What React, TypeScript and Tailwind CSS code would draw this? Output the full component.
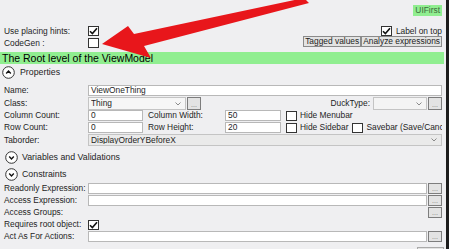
import React from "react";

const Check = ({ checked }: { checked?: boolean }) => (
  <div className="w-[11px] h-[10px] bg-white border border-[#333] flex items-center justify-center shrink-0">
    {checked && (
      <svg width="9" height="8" viewBox="0 0 9 8">
        <path d="M1 4.2 L3.4 6.6 L8 1.2" stroke="#111" strokeWidth="1.6" fill="none" />
      </svg>
    )}
  </div>
);

const Dots = () => (
  <div className="w-[14px] h-full bg-[#e3e3e3] border border-[#7d7d7d] flex items-end justify-center shrink-0">
    <span className="text-[7px] leading-[7px] text-[#777] pb-[1px]">...</span>
  </div>
);

const Combo = ({ text, className }: { text?: string; className: string }) => (
  <div className={`h-full border border-[#c4c4c4] flex items-center pl-[2px] pr-[4px] ${className}`}>
    <span className="flex-1 truncate">{text}</span>
    <svg width="6" height="4" viewBox="0 0 6 4">
      <path d="M0.5 0.5 L3 3 L5.5 0.5" stroke="#8a8a8a" strokeWidth="1" fill="none" />
    </svg>
  </div>
);

const Input = ({ text, className = "" }: { text?: string; className?: string }) => (
  <div className={`h-full bg-white border border-[#b8b8b8] flex items-center pl-[2px] ${className}`}>
    {text}
  </div>
);

const Circle = ({ up }: { up?: boolean }) => (
  <svg width="13" height="13" viewBox="0 0 13 13" className="shrink-0">
    <circle cx="6.5" cy="6.5" r="5.8" stroke="#333" strokeWidth="1" fill="white" />
    {up ? (
      <path d="M4.2 7.4 L6.5 5.1 L8.8 7.4" stroke="#111" strokeWidth="1.4" fill="none" />
    ) : (
      <path d="M4.2 5.6 L6.5 7.9 L8.8 5.6" stroke="#111" strokeWidth="1.4" fill="none" />
    )}
  </svg>
);

const Label = ({ children }: { children: React.ReactNode }) => (
  <div className="w-[84px] shrink-0 whitespace-nowrap">{children}</div>
);

export default function App() {
  return (
    <div className="relative w-[449px] h-[249px] overflow-hidden flex bg-[#efeff1] text-[#1e1e1e] font-['Liberation_Sans',Arial,sans-serif] text-[8.4px] leading-none">
      <div className="w-[446px] h-full pr-[4px]">
        {/* top */}
        <div className="h-[52px] flex justify-between items-start">
          <div className="pl-[4px] pt-[26px] flex flex-col gap-[2px]">
            <div className="h-[10px] flex items-center">
              <Label>Use placing hints:</Label>
              <Check checked />
            </div>
            <div className="h-[10px] flex items-center">
              <Label>CodeGen :</Label>
              <Check />
            </div>
          </div>
          <div className="flex flex-col items-end pt-[5px]">
            <div className="h-[11px] bg-[#90ee90] px-[2px] flex items-center text-[#3d6b3d]">UIFirst</div>
            <div className="mt-[10px] h-[10px] flex items-center gap-[4px]">
              <Check checked />
              <span>Label on top</span>
            </div>
            <div className="h-[11px] flex">
              <div className="h-full px-[1px] bg-[#e3e3e3] border border-[#8a8a8a] flex items-center">Tagged values</div>
              <div className="h-full px-[1px] bg-[#e3e3e3] border border-[#8a8a8a] flex items-center">Analyze expressions</div>
            </div>
          </div>
        </div>
        {/* green bar */}
        <div className="h-[12px] -mr-[2px] bg-[#90ee90] pl-[2px] flex items-center text-[10.5px] text-black">
          The Root level of the ViewModel
        </div>
        {/* Properties */}
        <div className="mt-[2px] h-[13px] pl-[2px] flex items-center gap-[5px] text-[8.8px]">
          <Circle up />
          <span>Properties</span>
        </div>
        <div className="pl-[4px] pt-[6px] flex flex-col">
          <div className="h-[11px] flex items-center">
            <Label>Name:</Label>
            <Input text="ViewOneThing" className="flex-1" />
          </div>
          <div className="mt-[1px] h-[13px] flex items-center">
            <Label>Class:</Label>
            <Combo text="Thing" className="w-[98px] bg-[#f6f6f6]" />
            <div className="ml-[1px] h-full"><Dots /></div>
            <div className="ml-auto flex items-center h-full">
              <span className="mr-[3px]">DuckType:</span>
              <Combo className="w-[54px] bg-[#f4f4f4]" />
              <div className="ml-[1px] h-full"><Dots /></div>
            </div>
          </div>
          <div className="h-[11px] flex items-center">
            <Label>Column Count:</Label>
            <Input text="0" className="w-[55px]" />
            <div className="ml-[5px] w-[77px]">Column Width:</div>
            <Input text="50" className="w-[56px]" />
            <div className="ml-[5px]"><Check /></div>
            <span className="ml-[3px]">Hide Menubar</span>
          </div>
          <div className="mt-[1px] h-[11px] flex items-center">
            <Label>Row Count:</Label>
            <Input text="0" className="w-[55px]" />
            <div className="ml-[5px] w-[77px]">Row Height:</div>
            <Input text="20" className="w-[56px]" />
            <div className="ml-[5px]"><Check /></div>
            <span className="ml-[3px]">Hide Sidebar</span>
            <div className="ml-[4px]"><Check /></div>
            <span className="ml-[3px] whitespace-nowrap overflow-hidden flex-1">Savebar (Save/Cancel)</span>
          </div>
          <div className="mt-[1px] h-[12px] flex items-center">
            <Label>Taborder:</Label>
            <Combo text="DisplayOrderYBeforeX" className="flex-1 bg-[#eaeaea]" />
          </div>
        </div>
        <div className="mt-[5px] h-[12px] pl-[5px] flex items-center gap-[4px] text-[8.8px]">
          <Circle />
          <span>Variables and Validations</span>
        </div>
        <div className="mt-[5px] h-[12px] pl-[5px] flex items-center gap-[4px] text-[8.8px]">
          <Circle />
          <span>Constraints</span>
        </div>
        <div className="pl-[4px] pt-[3px] flex flex-col">
          <div className="h-[11px] flex items-center">
            <Label>Readonly Expression:</Label>
            <Input className="flex-1" />
            <div className="ml-[1px] h-full"><Dots /></div>
          </div>
          <div className="mt-[1px] h-[11px] flex items-center">
            <Label>Access Expression:</Label>
            <Input className="flex-1" />
            <div className="ml-[1px] h-full"><Dots /></div>
          </div>
          <div className="mt-[1px] h-[11px] flex items-center">
            <Label>Access Groups:</Label>
            <div className="flex-1" />
            <div className="ml-[1px] h-full"><Dots /></div>
          </div>
          <div className="mt-[1px] h-[11px] flex items-center">
            <Label>Requires root object:</Label>
            <Check checked />
          </div>
          <div className="mt-[1px] h-[11px] flex items-center">
            <Label>Act As For Actions:</Label>
            <Input className="flex-1" />
            <div className="ml-[1px] h-full"><Dots /></div>
          </div>
          <div className="mt-[5px] h-[10px] flex justify-end">
            <div className="w-[27px] h-full bg-[#e3e3e3] border border-[#aaa] -mr-[2px]" />
          </div>
        </div>
      </div>
      <div className="w-[3px] h-full bg-[#1c1c1c]" />
      {/* red annotation arrow */}
      <svg className="absolute left-0 top-0 pointer-events-none" width="449" height="249" viewBox="0 0 449 249">
        <polygon
          points="102,44 128,26 134,34 304,-2 309,3 144,46 151,58"
          fill="#e8161b"
        />
      </svg>
    </div>
  );
}
